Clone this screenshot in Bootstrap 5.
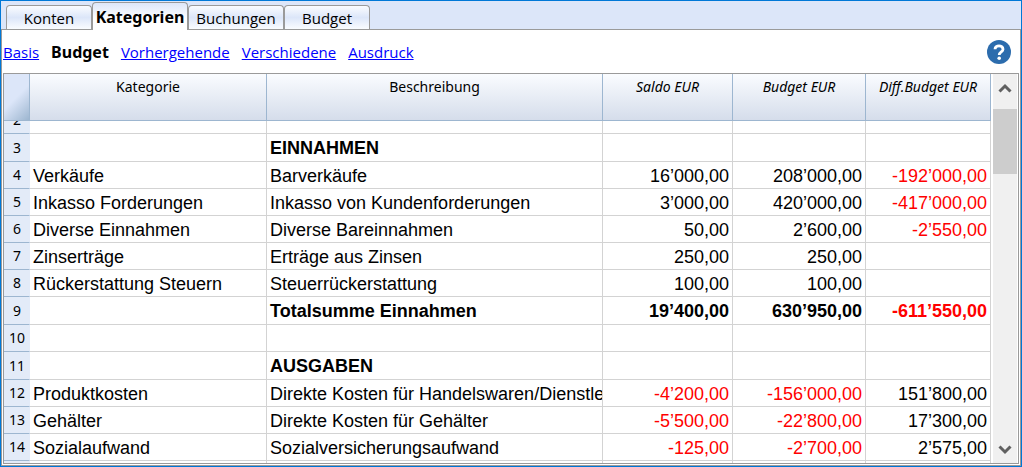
<!DOCTYPE html>
<html lang="de">
<head>
<meta charset="utf-8">
<meta name="viewport" content="width=device-width, initial-scale=1">
<title>Kategorien – Budget</title>
<link href="https://cdn.jsdelivr.net/npm/bootstrap@5.3.0/dist/css/bootstrap.min.css" rel="stylesheet">
<style>
  body { font-family: "Open Sans", "Noto Sans", sans-serif; font-size: 15px; line-height: 20px; color: #000; }
  .app-window { border: 1px solid #0078d7; background: #dce6f9; }
  .tab-strip { height: 28px; padding: 1px 5px 0; border: 0; }
  .tab-strip .nav-item { display: flex; align-items: flex-end; }
  .tab-strip .nav-link {
    height: 24px; margin: 0; padding: 0; line-height: 22px; color: #000; white-space: nowrap;
    border: 1px solid #9a9a9a; border-bottom: 0; border-radius: 4px 4px 0 0;
    background: linear-gradient(#fafcff, #dce6f9 50%, #fafcff);
  }
  .tab-strip .nav-link.active { height: 28px; font: 700 16px/24px "Noto Sans", sans-serif; color: #000; background: linear-gradient(#dce6f9, #fff 60%); border-color: #9a9a9a; position: relative; margin-bottom: -1px; z-index: 1; }
  .tab-strip .tab-s { width: 86px; }
  .tab-strip .tab-l { width: 96px; }
  .page-pane { border: 1px solid #9a9a9a; background: #fff; padding: 0 1px 1px; }
  .view-bar { height: 43px; gap: 12px; }
  .view-bar a { color: #00f; }
  .view-bar strong { font: 700 16px/20px "Noto Sans", sans-serif; }
  .help-btn { width: 24px; height: 24px; }
  .grid-frame { border: 1px solid #9a9a9a; }
  .ledger { table-layout: fixed; border-collapse: separate; border-spacing: 0; font: 18px/24px "Liberation Sans", Arial, sans-serif; width: 100%; }
  .ledger th, .ledger td { padding: 0 3px; height: 27px; overflow: hidden; white-space: nowrap; border: 0 solid #d3d3d3; border-width: 0 1px 1px 0; }
  .ledger td { padding-top: 2px; }
  .ledger .total td, .ledger .total th { height: 28px; }
  .ledger .total td { font-weight: 700; padding-top: 0; line-height: 26px; }
  .ledger thead th { height: 47px; vertical-align: top; text-align: center; font: 14px/26px "Noto Sans", sans-serif; background: linear-gradient(#fafcff, #d5ddeb); border-color: #9db6d0; }
  .ledger thead th.num { font-style: italic; text-align: center; }
  .ledger thead th.corner { background: linear-gradient(135deg, #dce6f9 50%, #9db6d0); }
  .ledger tbody th { font: 14px/26px "Noto Sans", sans-serif; text-align: center; background: #e3ebf8; border-color: #9db6d0; border-right-color: #e3ebf8; padding: 0 0 0 1px; }
  .ledger .num { text-align: right; }
  .ledger .neg { color: #f00; }
  .ledger .cut > * { height: 13px; line-height: 12px; }
  .cut-label { height: 12px; overflow: hidden; display: flex; align-items: flex-end; justify-content: center; line-height: 26px; }
  .c-no { width: 26px; } .c-cat { width: 237px; } .c-sal { width: 130px; } .c-bud { width: 133px; } .c-dif { width: 125px; }
  .scroller { width: 24px; background: #f0f0f0; margin: 0 1px 0 2px; }
  .scroller button { height: 28px; }
  .scroll-thumb { height: 65px; margin-top: 7px; background: #cdcdcd; }
</style>
</head>
<body>
<div class="app-window vh-100 d-flex flex-column">
  <ul class="nav nav-tabs tab-strip flex-nowrap flex-shrink-0">
    <li class="nav-item"><button type="button" class="nav-link tab-s">Konten</button></li>
    <li class="nav-item"><button type="button" class="nav-link tab-l active">Kategorien</button></li>
    <li class="nav-item"><button type="button" class="nav-link tab-l">Buchungen</button></li>
    <li class="nav-item"><button type="button" class="nav-link tab-s">Budget</button></li>
  </ul>
  <main class="page-pane flex-grow-1 d-flex flex-column overflow-hidden">
    <nav class="view-bar d-flex align-items-center flex-shrink-0">
      <a href="#">Basis</a>
      <strong>Budget</strong>
      <a href="#">Vorhergehende</a>
      <a href="#">Verschiedene</a>
      <a href="#">Ausdruck</a>
      <button type="button" class="help-btn btn p-0 border-0 ms-auto me-2 d-flex" aria-label="Hilfe">
        <svg width="24" height="24" viewBox="0 0 24 24" fill="none"><circle cx="12" cy="12" r="12" fill="#2c6cad"/><path d="M8 9.200C8 4.800 16 4.800 16 9.200C16 11.800 12.200 11.800 12.200 15" stroke="#fff" stroke-width="2.800"/><circle cx="12.200" cy="18.200" r="1.800" fill="#fff"/></svg>
      </button>
    </nav>
    <div class="grid-frame flex-grow-1 d-flex overflow-hidden">
      <div class="flex-grow-1 overflow-hidden">
        <table class="ledger">
          <colgroup><col class="c-no"><col class="c-cat"><col><col class="c-sal"><col class="c-bud"><col class="c-dif"></colgroup>
          <thead>
            <tr><th class="corner"></th><th>Kategorie</th><th>Beschreibung</th><th class="num">Saldo EUR</th><th class="num">Budget EUR</th><th class="num">Diff.Budget EUR</th></tr>
          </thead>
          <tbody>
            <tr class="cut"><th><div class="cut-label">2</div></th><td></td><td></td><td></td><td></td><td></td></tr>
            <tr class="total"><th>3</th><td></td><td>EINNAHMEN</td><td></td><td></td><td></td></tr>
            <tr><th>4</th><td>Verkäufe</td><td>Barverkäufe</td><td class="num">16’000,00</td><td class="num">208’000,00</td><td class="num neg">-192’000,00</td></tr>
            <tr><th>5</th><td>Inkasso Forderungen</td><td>Inkasso von Kundenforderungen</td><td class="num">3’000,00</td><td class="num">420’000,00</td><td class="num neg">-417’000,00</td></tr>
            <tr><th>6</th><td>Diverse Einnahmen</td><td>Diverse Bareinnahmen</td><td class="num">50,00</td><td class="num">2’600,00</td><td class="num neg">-2’550,00</td></tr>
            <tr><th>7</th><td>Zinserträge</td><td>Erträge aus Zinsen</td><td class="num">250,00</td><td class="num">250,00</td><td></td></tr>
            <tr><th>8</th><td>Rückerstattung Steuern</td><td>Steuerrückerstattung</td><td class="num">100,00</td><td class="num">100,00</td><td></td></tr>
            <tr class="total"><th>9</th><td></td><td>Totalsumme Einnahmen</td><td class="num">19’400,00</td><td class="num">630’950,00</td><td class="num neg">-611’550,00</td></tr>
            <tr><th>10</th><td></td><td></td><td></td><td></td><td></td></tr>
            <tr class="total"><th>11</th><td></td><td>AUSGABEN</td><td></td><td></td><td></td></tr>
            <tr><th>12</th><td>Produktkosten</td><td>Direkte Kosten für Handelswaren/Dienstle</td><td class="num neg">-4’200,00</td><td class="num neg">-156’000,00</td><td class="num">151’800,00</td></tr>
            <tr><th>13</th><td>Gehälter</td><td>Direkte Kosten für Gehälter</td><td class="num neg">-5’500,00</td><td class="num neg">-22’800,00</td><td class="num">17’300,00</td></tr>
            <tr><th>14</th><td>Sozialaufwand</td><td>Sozialversicherungsaufwand</td><td class="num neg">-125,00</td><td class="num neg">-2’700,00</td><td class="num">2’575,00</td></tr>
            <tr><th></th><td></td><td></td><td></td><td></td><td></td></tr>
          </tbody>
        </table>
      </div>
      <div class="scroller d-flex flex-column flex-shrink-0">
        <button type="button" class="btn p-0 border-0 rounded-0 d-flex align-items-center justify-content-center flex-shrink-0" aria-label="Nach oben"><svg width="14" height="12" viewBox="0 0 14 12" fill="none" stroke="#606060" stroke-width="3"><path d="M1.500 9.500L7 4L12.500 9.500"/></svg></button>
        <div class="scroll-thumb flex-shrink-0"></div>
        <button type="button" class="btn p-0 border-0 rounded-0 d-flex align-items-center justify-content-center mt-auto flex-shrink-0" aria-label="Nach unten"><svg width="14" height="12" viewBox="0 0 14 12" fill="none" stroke="#606060" stroke-width="3"><path d="M1.500 3.500L7 9L12.500 3.500"/></svg></button>
      </div>
    </div>
  </main>
</div>
<script src="https://cdn.jsdelivr.net/npm/bootstrap@5.3.0/dist/js/bootstrap.bundle.min.js"></script>
</body>
</html>
